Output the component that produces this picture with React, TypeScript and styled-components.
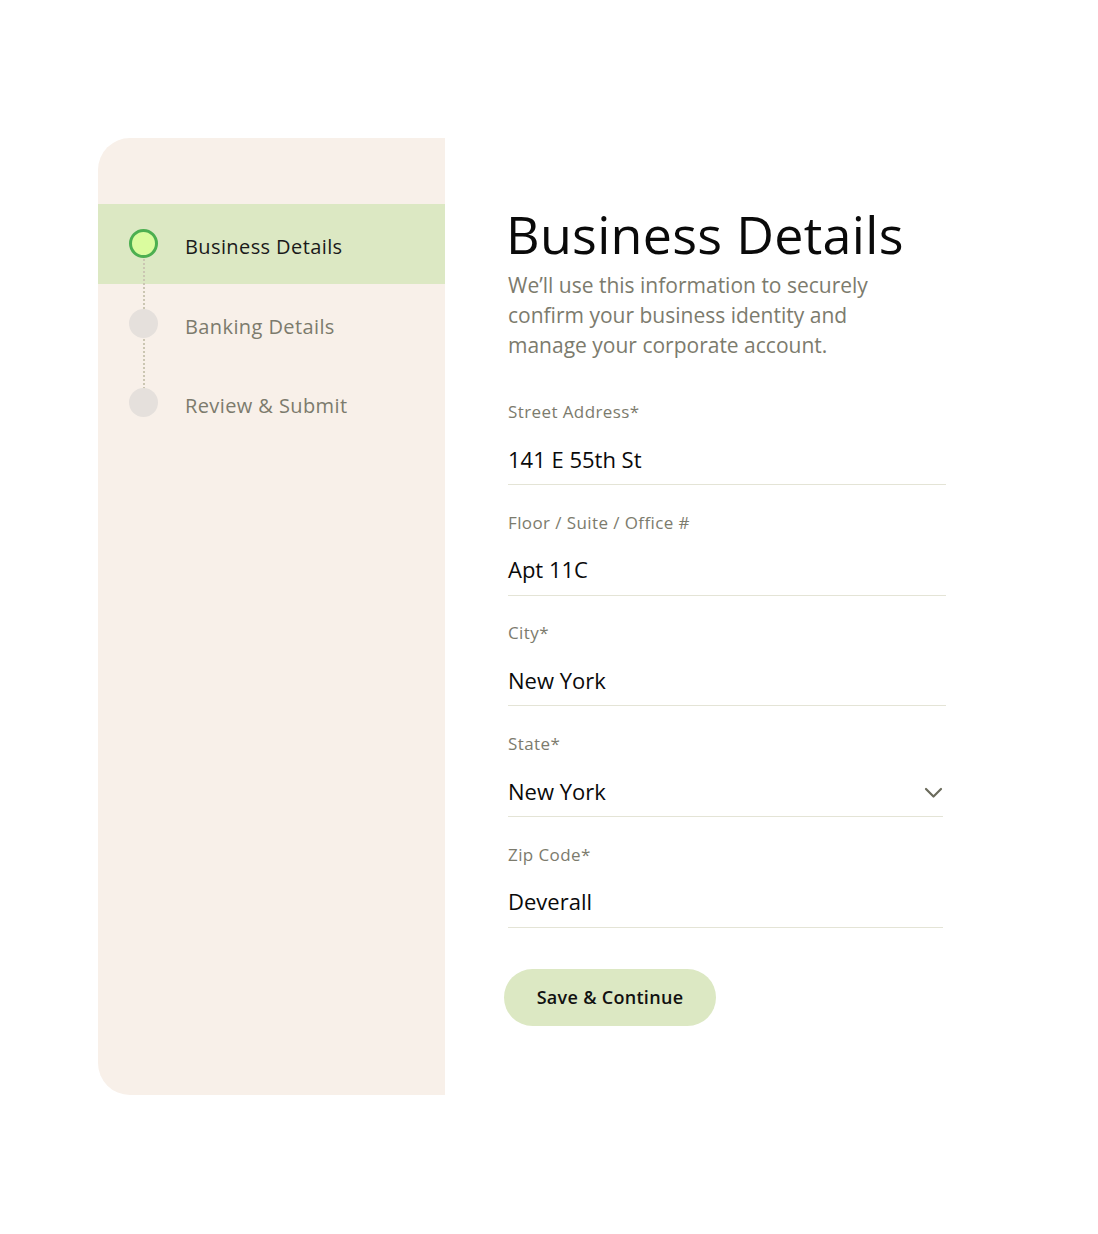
import React from 'react';
import styled, { createGlobalStyle } from 'styled-components';

const GlobalStyle = createGlobalStyle`
  body {
    margin: 0;
    background: #fff;
    font-family: 'Open Sans', 'Liberation Sans', sans-serif;
  }
`;

interface Step {
  label: string;
  active?: boolean;
}

interface Field {
  label: string;
  value: string;
  select?: boolean;
}

const steps: Step[] = [
  { label: 'Business Details', active: true },
  { label: 'Banking Details' },
  { label: 'Review & Submit' },
];

const fields: Field[] = [
  { label: 'Street Address*', value: '141 E 55th St' },
  { label: 'Floor / Suite / Office #', value: 'Apt 11C' },
  { label: 'City*', value: 'New York' },
  { label: 'State*', value: 'New York', select: true },
  { label: 'Zip Code*', value: 'Deverall' },
];

const Page = styled.div`
  display: flex;
  align-items: flex-start;
  padding: 138px 0 0 98px;
  min-height: 1234px;
  box-sizing: border-box;
`;

const Sidebar = styled.aside`
  width: 347px;
  height: 957px;
  flex-shrink: 0;
  background: #f8f0e9;
  border-radius: 32px 0 0 32px;
  padding-top: 66px;
  box-sizing: border-box;
`;

const StepList = styled.ul`
  list-style: none;
  margin: 0;
  padding: 0;
`;

const StepRow = styled.li<{ $active?: boolean }>`
  position: relative;
  display: flex;
  align-items: center;
  gap: 27px;
  height: 79.5px;
  padding-left: 31px;
  background: ${(p) => (p.$active ? '#dce8c3' : 'transparent')};

  &:not(:last-child)::after {
    content: '';
    position: absolute;
    left: 45px;
    top: 55px;
    height: 66px;
    border-left: 2px dotted #cbc6b2;
  }
`;

const Dot = styled.span<{ $active?: boolean }>`
  position: relative;
  z-index: 1;
  width: 29px;
  height: 29px;
  border-radius: 50%;
  box-sizing: border-box;
  background: ${(p) => (p.$active ? '#dafc9e' : '#e5e0dc')};
  border: ${(p) => (p.$active ? '3px solid #4caf50' : 'none')};
`;

const StepLabel = styled.span<{ $active?: boolean }>`
  padding-top: 6px;
  font-size: 20px;
  letter-spacing: 0.4px;
  color: ${(p) => (p.$active ? '#1a1a1a' : '#7c7b6d')};
`;

const Main = styled.main`
  margin-left: 63px;
  padding-top: 66px;
  width: 440px;
`;

const Title = styled.h1`
  margin: 0 0 0 -2px;
  font-size: 52px;
  font-weight: 400;
  line-height: 60px;
  color: #0a0a0a;
  letter-spacing: 0.3px;
  white-space: nowrap;
`;

const Subtitle = styled.p`
  margin: 6px 0 0 0;
  max-width: 375px;
  font-size: 21px;
  line-height: 30px;
  color: #7c7b6d;
`;

const Form = styled.form`
  margin-top: 41px;
  display: flex;
  flex-direction: column;
  gap: 26.7px;
`;

const FieldBox = styled.label<{ $narrow?: boolean }>`
  display: block;
  width: ${(p) => (p.$narrow ? '435px' : '438px')};
  border-bottom: 1.5px solid #e4e4d6;
`;

const FieldLabel = styled.span`
  display: block;
  margin-bottom: 10px;
  font-size: 17px;
  line-height: 22px;
  letter-spacing: 0.4px;
  color: #7c7b6d;
`;

const ValueRow = styled.div`
  display: flex;
  align-items: center;
  justify-content: space-between;
  height: 51px;
`;

const Value = styled.span`
  font-size: 22px;
  color: #0a0a0a;
`;

const Chevron = styled.svg`
  width: 19px;
  height: 12px;
  margin-top: 5px;
  color: #6b6b5c;
`;

const SaveButton = styled.button`
  margin: 41px 0 0 -4px;
  width: 212px;
  height: 57px;
  border: none;
  border-radius: 29px;
  background: #dce8c3;
  font-family: inherit;
  font-size: 18px;
  font-weight: 600;
  letter-spacing: 0.3px;
  color: #111;
  cursor: pointer;
`;

const App: React.FC = () => (
  <>
    <GlobalStyle />
    <Page>
      <Sidebar>
        <StepList>
          {steps.map((step) => (
            <StepRow key={step.label} $active={step.active}>
              <Dot $active={step.active} />
              <StepLabel $active={step.active}>{step.label}</StepLabel>
            </StepRow>
          ))}
        </StepList>
      </Sidebar>
      <Main>
        <Title>Business Details</Title>
        <Subtitle>
          We’ll use this information to securely confirm your business identity and manage your
          corporate account.
        </Subtitle>
        <Form onSubmit={(e) => e.preventDefault()}>
          {fields.map((field, i) => (
            <FieldBox key={field.label} $narrow={i >= 3}>
              <FieldLabel>{field.label}</FieldLabel>
              <ValueRow>
                <Value>{field.value}</Value>
                {field.select && (
                  <Chevron viewBox="0 0 19 12" fill="none" stroke="currentColor" strokeWidth="2.2" strokeLinecap="round" strokeLinejoin="round">
                    <path d="M2 2l7.5 7.5L17 2" />
                  </Chevron>
                )}
              </ValueRow>
            </FieldBox>
          ))}
        </Form>
        <SaveButton type="button">Save &amp; Continue</SaveButton>
      </Main>
    </Page>
  </>
);

export default App;
